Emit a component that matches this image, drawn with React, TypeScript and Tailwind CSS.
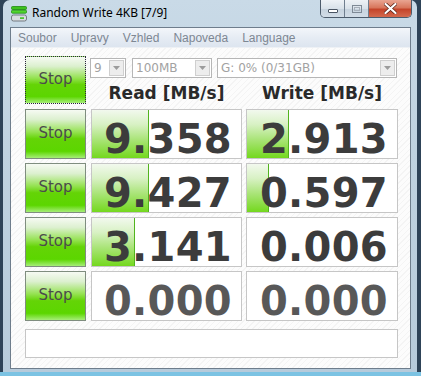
import React from "react";

type Row = { read: string; rw: number; write: string; ww: number; dim?: boolean };

const rows: Row[] = [
  { read: "9.358", rw: 57, write: "2.913", ww: 42 },
  { read: "9.427", rw: 57, write: "0.597", ww: 22 },
  { read: "3.141", rw: 43, write: "0.006", ww: 0 },
  { read: "0.000", rw: 0, write: "0.000", ww: 0, dim: true },
];

function StopButton({ focused, tall }: { focused?: boolean; tall?: boolean }) {
  return (
    <div
      className={
        "w-[61px] shrink-0 flex items-center justify-center bg-[linear-gradient(to_bottom,#f6faf3_0%,#dcf0cf_20%,#94e250_46%,#64d406_60%,#5cd600_86%,#a6ee78_100%)] " +
        (tall ? "h-[48px] " : "h-[50px] ") +
        (focused ? "border border-dotted border-[#2a2040]" : "border border-[#7f8d7f]")
      }
    >
      <span className="font-['DejaVu_Sans',sans-serif] text-[15px] text-[#4b4b4b] leading-none pb-[2px]">Stop</span>
    </div>
  );
}

function Combo({ w, text }: { w: string; text: string }) {
  return (
    <div className={w + " h-[20px] shrink-0 border border-[#b6b6b6] bg-white flex items-center pl-[3px] pr-[1px]"}>
      <span className="flex-1 font-['DejaVu_Sans',sans-serif] text-[12px] leading-none text-[#a2a2a2] whitespace-nowrap">{text}</span>
      <div className="w-[15px] h-[16px] border border-[#cfcfcf] bg-[#ededed] flex items-center justify-center">
        <svg width="7" height="4" viewBox="0 0 7 4">
          <path d="M0 0 H7 L3.5 4 Z" fill="#9c9c9c" />
        </svg>
      </div>
    </div>
  );
}

function Cell({ value, bar, w, dim }: { value: string; bar: number; w: string; dim?: boolean }) {
  return (
    <div className={w + " h-[50px] shrink-0 relative border border-[#c6c6c6] bg-white flex justify-end pr-[9px] pt-[9px]"}>
      {bar > 0 && (
        <div
          className="absolute left-0 top-0 bottom-0 border-r border-[#52b41e] bg-[linear-gradient(to_bottom,#f2f9ee_0%,#d8f1c4_30%,#a9e477_62%,#74d81e_100%)]"
          style={{ width: bar }}
        />
      )}
      <span
        className={
          "relative font-['DejaVu_Sans',sans-serif] font-bold text-[40px] leading-[40px] tracking-[0.3px] " +
          (dim ? "text-[#585858]" : "text-[#3c3c3c]")
        }
      >
        {value}
      </span>
    </div>
  );
}

export default function App() {
  return (
    <div className="w-[421px] h-[376px] overflow-hidden bg-[linear-gradient(to_bottom,#2e4358_0px,#2e4358_372px,#7cc3e3_372px)]">
      <div className="ml-[3px] w-[414px] h-[372px] rounded-t-[7px] flex flex-col pl-[7px] pr-[6px] pb-[3px] bg-[linear-gradient(to_bottom,#c9dae7_0%,#bfd2e0_40%,#b7cbdb_100%)]">
        {/* title bar */}
        <div className="h-[27px] shrink-0 flex items-start">
          <svg width="16" height="16" viewBox="0 0 16 16" className="mt-[6px] ml-[1px] shrink-0">
            <rect x="0.5" y="0.5" width="15" height="3" rx="1" fill="#3ec21e" stroke="#1f8a12" strokeWidth="0.8" />
            <rect x="0.5" y="4.2" width="15" height="3" rx="1" fill="#52d62c" stroke="#1f8a12" strokeWidth="0.8" />
            <rect x="0.5" y="9" width="15" height="6" rx="2" fill="#d9dde0" stroke="#6a7076" strokeWidth="0.9" />
            <rect x="9" y="11.3" width="4" height="1.6" fill="#3cc020" />
          </svg>
          <span className="ml-[5px] mt-[5px] font-['Noto_Sans',sans-serif] text-[12px] leading-[16px] text-black whitespace-nowrap">
            Random Write 4KB [7/9]
          </span>
          <div className="ml-auto -mr-[1px] flex h-[18px] border border-t-0 border-[#4c5b6b] rounded-b-[5px] overflow-hidden">
            <div className="w-[24px] h-full flex items-end justify-center pb-[4px] bg-[linear-gradient(to_bottom,#eef2f6_0%,#d9e2ea_50%,#c6d2dd_51%,#d2dde7_100%)] border-r border-[#6f7e8e]">
              <div className="w-[10px] h-[4px] rounded-[1px] border border-[#4a5563] bg-white" />
            </div>
            <div className="w-[24px] h-full flex items-center justify-center bg-[linear-gradient(to_bottom,#eef2f6_0%,#d9e2ea_50%,#c6d2dd_51%,#d2dde7_100%)] border-r border-[#6f7e8e]">
              <div className="w-[10px] h-[8px] border border-[#7f8a96] flex items-center justify-center">
                <div className="w-[6px] h-[4px] border border-[#a7b0ba]" />
              </div>
            </div>
            <div className="w-[42px] h-full flex items-center justify-center bg-[linear-gradient(to_bottom,#e9a592_0%,#d8765c_45%,#c4442a_55%,#d46a4e_100%)]">
              <svg width="13" height="11" viewBox="0 0 13 11">
                <path d="M1.5 1 L11.5 10 M11.5 1 L1.5 10" stroke="#5a2418" strokeWidth="3.6" strokeLinecap="round" />
                <path d="M1.5 1 L11.5 10 M11.5 1 L1.5 10" stroke="#ffffff" strokeWidth="2.2" strokeLinecap="round" />
              </svg>
            </div>
          </div>
        </div>

        {/* client */}
        <div className="flex-1 flex flex-col border border-[#6e7d8c] bg-[#fbfbfb] bg-[image:repeating-linear-gradient(135deg,#fcfcfc_0px,#fcfcfc_3px,#f4f4f4_3px,#f4f4f4_4px)]">
          {/* menu */}
          <div className="h-[20px] shrink-0 flex items-center bg-[linear-gradient(to_bottom,#f3f6fa_0%,#e6ecf4_50%,#dde5ef_100%)] border-b border-[#eef1f5]">
            {["Soubor", "Upravy", "Vzhled", "Napoveda", "Language"].map((m) => (
              <span key={m} className="px-[7px] font-['Liberation_Sans',sans-serif] text-[12px] leading-none text-[#7d8793]">
                {m}
              </span>
            ))}
          </div>

          {/* content */}
          <div className="flex flex-col pl-[14px] pt-[8px]">
            <div className="flex h-[48px]">
              <StopButton focused tall />
              <div className="ml-[4px] flex flex-col pt-[2px]">
                <div className="flex">
                  <Combo w="w-[36px]" text="9" />
                  <div className="ml-[6px]">
                    <Combo w="w-[80px]" text="100MB" />
                  </div>
                  <div className="ml-[5px]">
                    <Combo w="w-[180px]" text="G: 0% (0/31GB)" />
                  </div>
                </div>
                <div className="flex mt-[7px] ml-[1px] font-['DejaVu_Sans',sans-serif] font-bold text-[17px] leading-[17px] text-[#2a2a2a]">
                  <div className="w-[151px] text-center whitespace-nowrap">Read [MB/s]</div>
                  <div className="ml-[4px] w-[152px] text-center whitespace-nowrap">Write [MB/s]</div>
                </div>
              </div>
            </div>

            <div className="flex flex-col gap-[4px] mt-[5px]">
              {rows.map((r, i) => (
                <div key={i} className="flex">
                  <StopButton />
                  <div className="ml-[5px]">
                    <Cell w="w-[151px]" value={r.read} bar={r.rw} dim={r.dim} />
                  </div>
                  <div className="ml-[4px]">
                    <Cell w="w-[152px]" value={r.write} bar={r.ww} dim={r.dim} />
                  </div>
                </div>
              ))}
            </div>

            <div className="mt-[8px] w-[373px] h-[29px] border border-[#c6c6c6] bg-white" />
          </div>
        </div>
      </div>
    </div>
  );
}
